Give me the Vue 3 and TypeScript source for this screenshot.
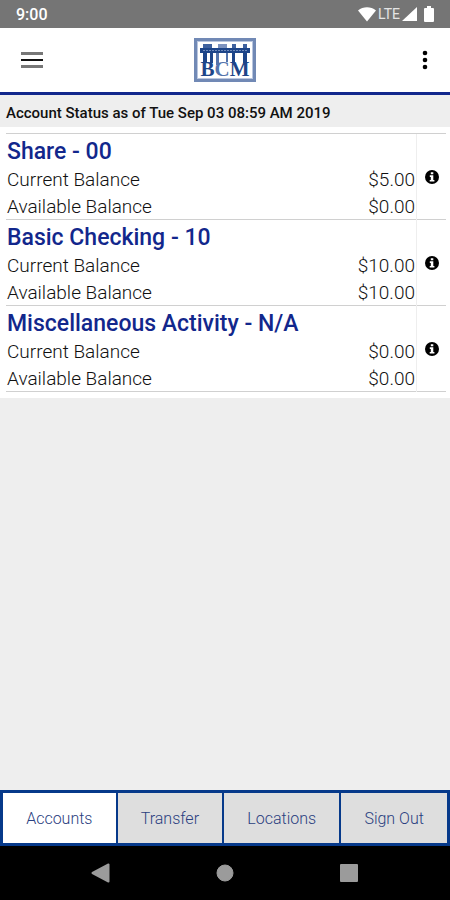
<script setup lang="ts">
import { ref } from 'vue'

interface Balance {
  label: string
  amount: string
}

interface Account {
  name: string
  balances: Balance[]
}

const accounts: Account[] = [
  {
    name: 'Share - 00',
    balances: [
      { label: 'Current Balance', amount: '$5.00' },
      { label: 'Available Balance', amount: '$0.00' },
    ],
  },
  {
    name: 'Basic Checking - 10',
    balances: [
      { label: 'Current Balance', amount: '$10.00' },
      { label: 'Available Balance', amount: '$10.00' },
    ],
  },
  {
    name: 'Miscellaneous Activity - N/A',
    balances: [
      { label: 'Current Balance', amount: '$0.00' },
      { label: 'Available Balance', amount: '$0.00' },
    ],
  },
]

const tabs: string[] = ['Accounts', 'Transfer', 'Locations', 'Sign Out']
const activeTab = ref<string>('Accounts')
</script>

<template>
  <div class="screen">
    <div class="status-bar">
      <span class="clock">9:00</span>
      <div class="signals">
        <svg class="wifi" viewBox="0 0 18 15" aria-hidden="true">
          <path d="M0 3.6C5.2-.8 12.8-.8 18 3.6L9 14.5z" />
        </svg>
        <span class="network">LTE</span>
        <svg class="cell" viewBox="0 0 16 16" aria-hidden="true">
          <path d="M15 1v14H0z" />
        </svg>
        <svg class="battery" viewBox="0 0 10 16" aria-hidden="true">
          <path d="M3 0h4v2h2q1 0 1 1v12q0 1-1 1H1q-1 0-1-1V3q0-1 1-1h2z" />
        </svg>
      </div>
    </div>

    <header class="app-bar">
      <button class="icon-button" type="button" aria-label="Menu">
        <svg class="menu-icon" viewBox="0 0 22 16" aria-hidden="true">
          <path d="M0 0h22v3H0zM0 13h22v3H0z" fill="#777" />
          <path d="M0 7h22v2H0z" fill="#111" />
        </svg>
      </button>
      <svg class="logo" viewBox="0 0 64 46" role="img" aria-label="BCM">
        <rect x="2.5" y="2.5" width="59" height="41" fill="#fff" stroke="#7189b5" stroke-width="3" />
        <rect x="4.5" y="4.5" width="55" height="37" fill="none" stroke="#b9c6df" stroke-width="1" />
        <!-- Beam and columns standing over the initials -->
        <path d="M10 7h9v4h-9zM39 7h4v4h-4zM50 7h4v4h-4z" fill="#3f629f" />
        <path d="M25 7h9v4h-9z" fill="#7d93bf" />
        <path d="M10 16h4v10h-4zM17 16h3v10h-3zM39 16h3v10h-3zM50 16h4v10h-4z" fill="#1d4589" />
        <path d="M23 16h3v12h-3zM33 16h2v9h-2z" fill="#5474ac" />
        <path d="M7 11h50v5H7z" fill="#1d4589" />
        <path d="M10 13.5h44" stroke="#6f8bbd" stroke-width="1" stroke-dasharray="2 1" />
        <text class="logo-letters" x="32" y="39" text-anchor="middle">B<tspan class="pale">C</tspan>M</text>
      </svg>
      <button class="icon-button" type="button" aria-label="More options">
        <svg class="more-icon" viewBox="0 0 6 20" aria-hidden="true">
          <circle cx="3" cy="3" r="2.3" />
          <circle cx="3" cy="10" r="2.3" />
          <circle cx="3" cy="17" r="2.3" />
        </svg>
      </button>
    </header>

    <main class="content">
      <p class="as-of">Account Status as of Tue Sep 03 08:59 AM 2019</p>
      <div class="accounts">
        <section v-for="account in accounts" :key="account.name" class="account">
          <div class="summary">
            <h2 class="name">{{ account.name }}</h2>
            <dl class="balances">
              <div v-for="balance in account.balances" :key="balance.label" class="balance">
                <dt>{{ balance.label }}</dt>
                <dd>{{ balance.amount }}</dd>
              </div>
            </dl>
          </div>
          <button class="info" type="button" :aria-label="`Details for ${account.name}`">
            <svg class="info-icon" viewBox="0 0 14 14" aria-hidden="true">
              <circle cx="7" cy="7" r="7" fill="#000" />
              <path d="M5.8 2.2h2.5v2H5.8zM4.8 5.3h3.5v4.6h1.1v1.6H4.7V9.9h1.1v-3h-1z" fill="#fff" />
            </svg>
          </button>
        </section>
      </div>
    </main>

    <nav class="tabs" aria-label="Main">
      <button
        v-for="tab in tabs"
        :key="tab"
        type="button"
        class="tab"
        :class="{ active: tab === activeTab }"
        @click="activeTab = tab"
      >
        {{ tab }}
      </button>
    </nav>

    <div class="system-nav">
      <button type="button" class="system-button" aria-label="Back">
        <svg class="system-icon" viewBox="0 0 20 20" aria-hidden="true"><path d="M17.5 1.5v17L1.5 10z" stroke-width="2" stroke-linejoin="round" /></svg>
      </button>
      <button type="button" class="system-button" aria-label="Home">
        <svg class="system-icon" viewBox="0 0 20 20" aria-hidden="true"><circle cx="10" cy="10" r="8" stroke-width="1" /></svg>
      </button>
      <button type="button" class="system-button" aria-label="Recent apps">
        <svg class="system-icon" viewBox="0 0 20 20" aria-hidden="true"><rect x="2" y="2" width="16" height="16" stroke-width="2" stroke-linejoin="round" /></svg>
      </button>
    </div>
  </div>
</template>

<style>
body {
  margin: 0;
  background: #eee;
}
</style>

<style scoped>
.screen {
  display: flex;
  flex-direction: column;
  min-height: 100vh;
  background: #eee;
  color: #111;
  font-family: Roboto, "Liberation Sans", sans-serif;
}

button {
  margin: 0;
  padding: 0;
  border: 0;
  background: none;
  color: inherit;
  font: inherit;
  cursor: pointer;
}

svg {
  display: block;
}

.status-bar {
  display: flex;
  align-items: center;
  justify-content: space-between;
  height: 28px;
  padding: 0 16px;
  background: #757575;
  color: #fff;
}

.clock {
  font-size: 16px;
  font-weight: 500;
}

.signals {
  display: flex;
  align-items: center;
  gap: 2px;
  fill: #fff;
}

.wifi {
  width: 18px;
  height: 15px;
}

.network {
  font-size: 14px;
  color: #e4e4e4;
}

.cell {
  width: 16px;
  height: 16px;
}

.battery {
  width: 10px;
  height: 16px;
  margin-left: 4px;
}

.app-bar {
  display: flex;
  align-items: center;
  justify-content: space-between;
  height: 64px;
  padding: 0 10px;
  border-bottom: 3px solid #12278c;
  background: #fff;
}

.icon-button {
  display: flex;
  align-items: center;
  justify-content: center;
  width: 44px;
  height: 44px;
}

.icon-button:last-child {
  justify-content: flex-end;
  padding-right: 12px;
}

.menu-icon {
  width: 22px;
  height: 16px;
}

.more-icon {
  width: 6px;
  height: 20px;
}

.logo {
  width: 64px;
  height: 46px;
}

.logo-letters {
  fill: #1d4589;
  font-family: "Liberation Serif", serif;
  font-size: 21px;
  font-weight: 700;
}

.pale {
  fill: #5474ac;
}

.content {
  flex: 1;
}

.as-of {
  margin: 0;
  padding: 8px 6px 4px;
  font-size: 15px;
  font-weight: 500;
  line-height: 20px;
}

.accounts {
  padding: 6px 4px 6px 6px;
  background: #fff;
}

.account {
  display: flex;
  border-top: 1px solid #d0d0d0;
}

.account:last-child {
  border-bottom: 1px solid #d0d0d0;
}

.summary {
  flex: 1;
  margin-bottom: -1px;
  padding: 3px 1px 0;
  border-right: 1px solid #eee;
}

.name {
  margin: 0;
  color: #12278c;
  font-size: 23px;
  font-weight: 500;
  line-height: 29px;
}

.balances {
  margin: 0;
}

.balance {
  display: flex;
  justify-content: space-between;
  font-size: 19px;
  font-weight: 300;
  line-height: 27px;
}

.balance dd {
  margin: 0;
}

.info {
  display: flex;
  align-items: center;
  justify-content: center;
  width: 29px;
}

.info-icon {
  width: 14px;
  height: 14px;
}

.tabs {
  display: flex;
  gap: 2px;
  padding: 3px;
  background: #06398a;
}

.tab {
  flex: 1 1 auto;
  height: 50px;
  background: #dedede;
  color: #2a4080;
  font-size: 16px;
  font-weight: 300;
}

.tab.active {
  background: #fff;
}

.system-nav {
  display: flex;
  align-items: center;
  justify-content: center;
  gap: 80px;
  height: 54px;
  background: #000;
}

.system-button {
  display: flex;
  align-items: center;
  justify-content: center;
  width: 44px;
  height: 44px;
}

.system-icon {
  width: 20px;
  height: 20px;
  fill: #9b9b9b;
  stroke: #9b9b9b;
}
</style>
